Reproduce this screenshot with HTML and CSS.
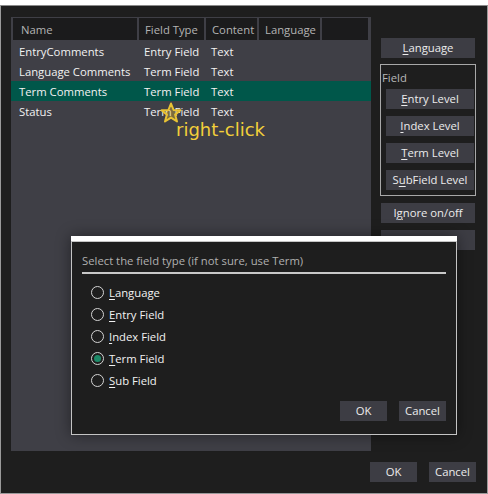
FILE: index.html
```html
<!DOCTYPE html>
<html>
<head>
<meta charset="utf-8">
<link rel="stylesheet" href="styles.css">
</head>
<body>
<div class="window">
  <div class="main">
    <div class="panel">
      <div class="head">
        <div class="hc c-name">Name</div>
        <div class="hc c-type">Field Type</div>
        <div class="hc c-content">Content</div>
        <div class="hc c-lang">Language</div>
        <div class="hc c-rest"></div>
      </div>
      <div class="row"><span class="r-name">EntryComments</span><span class="r-type">Entry Field</span><span class="r-content">Text</span></div>
      <div class="row"><span class="r-name">Language Comments</span><span class="r-type">Term Field</span><span class="r-content">Text</span></div>
      <div class="row sel"><span class="r-name">Term Comments</span><span class="r-type">Term Field</span><span class="r-content">Text</span></div>
      <div class="row"><span class="r-name">Status</span><span class="r-type">Term Field</span><span class="r-content">Text</span></div>
    </div>
    <div class="side">
      <div class="btn wide"><u>L</u>anguage</div>
      <div class="group">
        <div class="glabel">Field</div>
        <div class="btn gbtn"><u>E</u>ntry Level</div>
        <div class="btn gbtn"><u>I</u>ndex Level</div>
        <div class="btn gbtn"><u>T</u>erm Level</div>
        <div class="btn gbtn">S<u>u</u>bField Level</div>
      </div>
      <div class="btn wide gap7">I<u>g</u>nore on/off</div>
      <div class="btn wide gap7"></div>
    </div>
  </div>
  <div class="footer">
    <div class="btn small">OK</div>
    <div class="btn small">Cancel</div>
  </div>

  <svg class="star" width="22" height="22" viewBox="0 0 22 22">
    <polygon points="11,1.5 13.6,8 20.5,8.3 15.1,12.6 17,19.5 11,15.6 5,19.5 6.9,12.6 1.5,8.3 8.4,8" fill="rgba(235,195,50,0.35)" stroke="#e8c234" stroke-width="2" stroke-linejoin="round"/>
  </svg>
  <div class="hint">right-click</div>

  <div class="dialog">
    <div class="dbar"></div>
    <div class="dbody">
      <div class="dtitle">Select the field type (if not sure, use Term)</div>
      <div class="dsep"></div>
      <div class="radios">
        <div class="radio"><span class="circle"></span><span><u>L</u>anguage</span></div>
        <div class="radio"><span class="circle"></span><span><u>E</u>ntry Field</span></div>
        <div class="radio"><span class="circle"></span><span><u>I</u>ndex Field</span></div>
        <div class="radio"><span class="circle on"></span><span><u>T</u>erm Field</span></div>
        <div class="radio"><span class="circle"></span><span><u>S</u>ub Field</span></div>
      </div>
      <div class="dfoot">
        <div class="btn small">OK</div>
        <div class="btn small">Cancel</div>
      </div>
    </div>
  </div>
</div>
</body>
</html>
```
FILE: styles.css
```css
* { box-sizing: border-box; }
html, body { margin: 0; padding: 0; }
body {
  background: #ffffff;
  width: 488px;
  height: 494px;
  overflow: hidden;
  font-family: "Open Sans", "Noto Sans", sans-serif;
  font-size: 11.3px;
  color: #f2f2f2;
}
u { text-decoration: underline; text-underline-offset: 2px; }
.window {
  position: relative;
  margin-top: 5px;
  height: 489px;
  background: #1e1e1e;
  border: 1px solid #9a9a9a;
  border-top-color: #8a8a8a;
}
.main {
  display: flex;
  padding: 11px 11px 0 10px;
}
.panel {
  width: 362px;
  height: 434px;
  background: #3f3f46;
  padding-top: 1px;
}
.head {
  display: flex;
  gap: 2px;
  margin: 0 3px 0 2px;
  height: 22px;
}
.hc {
  background: #1b1b1c;
  color: #b4b4b4;
  line-height: 22px;
  padding-top: 1px;
  padding-left: 6px;
  white-space: nowrap;
}
.c-name { width: 124px; padding-left: 8px; }
.c-type { width: 65px; }
.c-content { width: 51px; }
.c-lang { width: 61px; }
.c-rest { flex: 1; }
.row {
  display: flex;
  height: 20px;
  line-height: 20px;
  padding-top: 1px;
  padding-left: 8px;
  white-space: nowrap;
}
.head + .row { margin-top: 1px; }
.row.sel { background: #00574a; }
.r-name { width: 125px; }
.r-type { width: 67px; }
.side {
  margin-left: 9px;
  width: 96px;
  padding-top: 21px;
  display: flex;
  flex-direction: column;
  align-items: flex-start;
}
.btn {
  background: #3d3d44;
  color: #ececec;
  height: 20px;
  line-height: 20px;
  text-align: center;
  white-space: nowrap;
}
.wide { width: 94px; margin-left: 1px; }
.gap7 { margin-top: 7px; }
.group {
  margin-top: 6px;
  width: 96px;
  height: 132px;
  border: 1px solid #a8a8a8;
  padding: 0 1px 0 5px;
  display: flex;
  flex-direction: column;
  gap: 7px;
}
.glabel {
  color: #b8b8b8;
  line-height: 16px;
  padding-top: 5px;
  margin-left: -4px;
  height: 24px;
  margin-bottom: -7px;
}
.gbtn { width: 88px; }
.footer {
  display: flex;
  justify-content: flex-end;
  gap: 12px;
  margin-top: 11px;
  padding-right: 11px;
}
.small { width: 47px; }
.star {
  position: absolute;
  left: 159px;
  top: 96px;
}
.hint {
  position: absolute;
  left: 175px;
  top: 113px;
  font-family: "DejaVu Sans", sans-serif;
  font-size: 18px;
  color: #f2cf3a;
  line-height: 22px;
}
.dialog {
  position: absolute;
  left: 70px;
  top: 230px;
  width: 386px;
  height: 199px;
  background: #1e1e1e;
  box-shadow: 0 0 14px rgba(0,0,0,0.45);
}
.dbar { height: 5px; background: #ffffff; }
.dbody {
  height: 194px;
  border: 1px solid #c4c4c4;
  padding: 11px 10px 0 10px;
}
.dtitle {
  color: #b0b0b0;
  line-height: 16px;
  height: 19px;
}
.dsep {
  height: 2px;
  background: #c8c8c8;
}
.radios {
  margin-top: 7px;
  padding-left: 9px;
  display: flex;
  flex-direction: column;
}
.radio {
  display: flex;
  align-items: center;
  height: 22px;
  gap: 5px;
}
.circle {
  width: 13px;
  height: 13px;
  border: 1px solid #d4d4d4;
  border-radius: 50%;
  display: flex;
  align-items: center;
  justify-content: center;
}
.circle.on::after {
  content: "";
  width: 7px;
  height: 7px;
  border-radius: 50%;
  background: #1d8a68;
}
.dfoot {
  display: flex;
  justify-content: flex-end;
  gap: 12px;
  margin-top: 10px;
}
```
